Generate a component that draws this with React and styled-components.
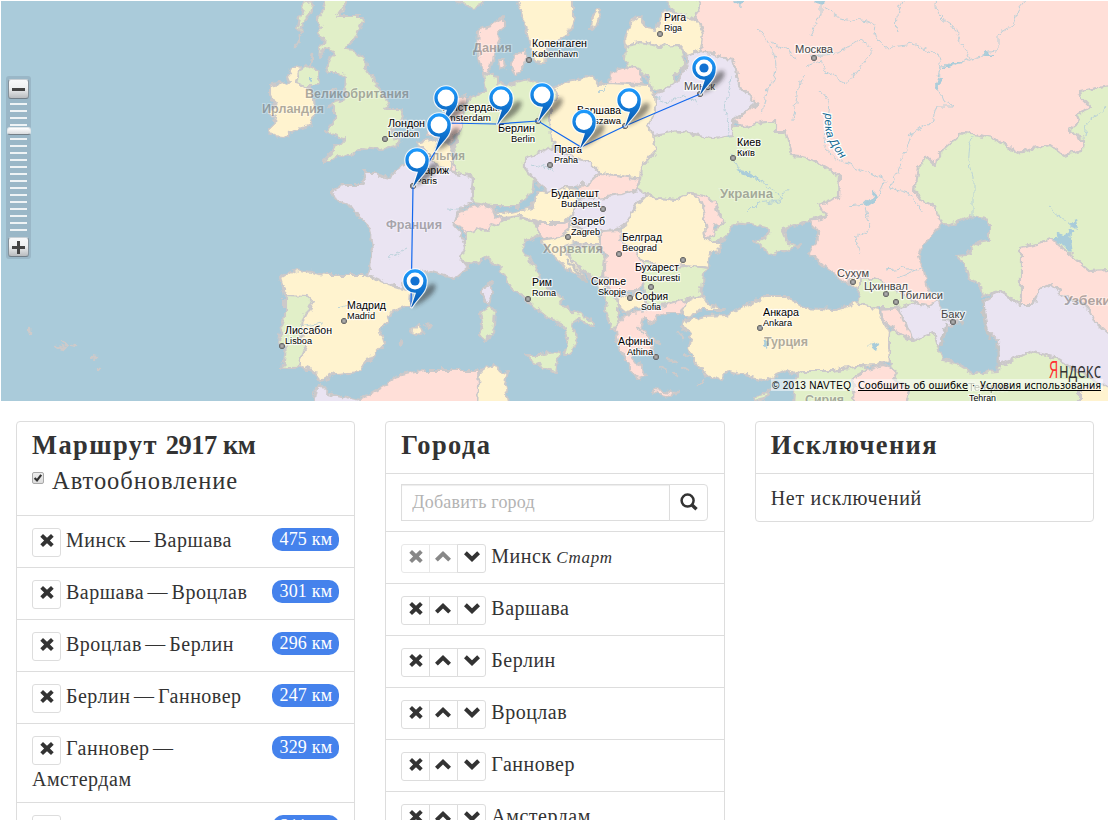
import React from "react";
import styled, { createGlobalStyle, css } from "styled-components";

const GlobalStyle = createGlobalStyle`
  * { box-sizing: border-box; }
  body {
    margin: 0;
    background: #fff;
    color: #333;
    font-family: "Liberation Serif", serif;
    font-size: 20px;
    line-height: 27px;
  }
  html, body { overflow: hidden; }
`;

const Page = styled.div`
  width: 1109px;
  height: 820px;
  padding: 1px 0 0 1px;
  overflow: hidden;
`;

const MapFrame = styled.div`
  position: relative;
  height: 400px;
  background: #aacbda;
  overflow: hidden;
`;

const MapSvg = styled.svg`
  display: block;
  width: 1107px;
  height: 400px;
`;

const ZoomControl = styled.div`
  position: absolute;
  left: 5px;
  top: 75px;
  width: 25px;
  height: 183px;
  padding: 3px 2px 2px;
  display: flex;
  flex-direction: column;
  align-items: center;
  justify-content: space-between;
  border-radius: 3px;
  background: rgba(120, 140, 155, 0.3);
`;

const ZoomButton = styled.div`
  width: 21px;
  height: 20px;
  flex: none;
  border: 1px solid #85929b;
  border-top-color: #c9d0d5;
  border-bottom: 1px solid #717e88;
  border-radius: 3px;
  background: linear-gradient(#f8f9fa, #eef0f1 45%, #b9bcbf);
  display: flex;
  align-items: center;
  justify-content: center;
`;

const Ticks = styled.div`
  width: 17px;
  height: 128px;
  margin-top: -3px;
  background: repeating-linear-gradient(#eef3f5 0 2px, transparent 2px 7px);
`;

const Handle = styled.div`
  position: absolute;
  left: 1px;
  top: 51px;
  width: 24px;
  height: 8px;
  border-radius: 3px;
  border: 1px solid #dfe5e8;
  border-bottom-color: #747f87;
  background: linear-gradient(#fff, #d9dcde);
`;

const Columns = styled.main`
  display: grid;
  grid-template-columns: repeat(3, 1fr);
  gap: 30px;
  padding: 20px 15px 0;
  align-items: start;
`;

const Panel = styled.section`
  border: 1px solid #ddd;
  border-radius: 4px;
`;

const Header = styled.header`
  padding: 10px 15px;
  height: ${(p) => (p.$tall ? 93 : 51)}px;
`;

const Title = styled.h3`
  margin: 0;
  font-size: 26.5px;
  line-height: 26px;
  font-weight: 700;
  white-space: nowrap;
  letter-spacing: 1.4px;
`;

const Total = styled.span`
  letter-spacing: -0.5px;
`;

const AutoLabel = styled.label`
  display: flex;
  align-items: flex-start;
  gap: 8px;
  margin-top: 10px;
  font-size: 24.5px;
  line-height: 26px;
  letter-spacing: 0.95px;
`;

const CheckBox = styled.span`
  display: flex;
  width: 12px;
  height: 12px;
  margin-top: 4px;
  border: 1px solid #a9a9a9;
  border-radius: 2px;
  background: linear-gradient(#eee, #dcdcdc);
`;

const List = styled.ul`
  list-style: none;
  margin: 0;
  padding: 0;
`;

const Row = styled.li`
  border-top: 1px solid #ddd;
  padding: 10px 15px;
  letter-spacing: 0.5px;
  word-spacing: -2px;
`;

const Name = styled.span`
  position: relative;
  top: 1px;
`;

const StartMark = styled.em`
  position: relative;
  top: 1px;
  margin-left: 1px;
  font-size: 17px;
  letter-spacing: 0.7px;
`;

const Badge = styled.span`
  float: right;
  margin-top: 2px;
  padding: 0 7px;
  height: 23px;
  line-height: 23px;
  border-radius: 10px;
  background: #4582ec;
  color: #fff;
  font-size: 18px;
  letter-spacing: 0.2px;
  word-spacing: 0;
`;

const Buttons = styled.span`
  display: inline-flex;
  vertical-align: top;
  margin: 2px 5px 0 0;
`;

const Button = styled.button`
  width: 29px;
  height: 29px;
  margin: 0;
  padding: 0;
  display: flex;
  justify-content: center;
  border: 1px solid #ddd;
  border-radius: 3px;
  background: #fff;
  color: #333;
  ${(p) =>
    p.$grouped &&
    css`
      & + & { margin-left: -1px; }
      &:not(:first-child) { border-top-left-radius: 0; border-bottom-left-radius: 0; }
      &:not(:last-child) { border-top-right-radius: 0; border-bottom-right-radius: 0; }
    `}
  ${(p) =>
    p.$disabled &&
    css`
      color: #888;
      border-color: #e8e8e8;
    `}
`;

const SearchRow = styled.form`
  display: flex;
  height: 58px;
  border-top: 1px solid #ddd;
  padding: 10px 16px 10px 15px;
`;

const Input = styled.input`
  flex: 1;
  min-width: 0;
  height: 37px;
  padding: 0 10px;
  border: 1px solid #ddd;
  border-radius: 0;
  box-shadow: inset 0 1px 1px rgba(0, 0, 0, 0.075);
  font: 18px "Liberation Serif", serif;
  letter-spacing: 0.2px;
  &::placeholder { color: #b3b3b3; opacity: 1; }
`;

const SearchButton = styled.button`
  width: 39px;
  height: 37px;
  margin-left: -1px;
  padding: 6px 9px 8px 10px;
  border: 1px solid #ddd;
  border-radius: 0 4px 4px 0;
  background: #fff;
`;

const Empty = styled.div`
  height: 48px;
  border-top: 1px solid #ddd;
  padding: 11px 15px;
  letter-spacing: 0.7px;
`;

const GlyphSvg = styled.svg`
  flex: none;
  margin: 2.5px ${(p) => (p.$kind === "up" ? 1.5 : 0)}px 0 0;
`;

const GLYPHS = {
  x: "M4 2L8 5.7L12 2L14.7 4.7L10.9 8.5L14.7 12.3L12 15L8 11.3L4 15L1.3 12.3L5.1 8.5L1.3 4.7Z",
  up: "M8 3L16 10.8L13.2 13.5L8 8.6L2.8 13.5L0 10.8Z",
  down: "M8 14L0 6.2L2.8 3.3L8 8.3L13.2 3.3L16 6.2Z",
};

const Glyph = ({ kind }) => (
  <GlyphSvg $kind={kind} width="16" height="18" viewBox="0 0 16 18">
    <path d={GLYPHS[kind]} fill="currentColor" />
  </GlyphSvg>
);

const C = { g: "#e1efc8", y: "#fff3cf", p: "#ffdfd8", v: "#eae4f2" };

const LANDS = [
  ["g", "325,0 327,10 320,20 323,30 318,37 325,40 323,50 322,60 328,50 335,53 330,67 328,75 340,75 348,80 347,90 348,100 337,103 330,107 337,110 337,120 333,128 327,133 337,138 347,140 343,145 337,147 333,155 325,163 332,163 340,157 353,158 363,150 383,152 400,147 403,142 390,135 400,128 406,120 403,112 387,112 390,103 382,93 377,83 368,70 367,60 357,53 347,52 357,40 365,23 363,18 340,18 347,8 350,0"],
  ["g", "307,5 315,2 312,15 306,22 302,35 300,30 302,20"],
  ["y", "290,78 293,70 305,67 300,75 298,84 308,88 313,90 316,100 317,115 312,127 300,131 285,139 275,138 270,132 277,125 278,118 272,115 278,108 272,97 272,88 285,85 292,83"],
  ["g", "300,75 310,67 318,72 322,82 318,88 308,88 298,85"],
  ["g", "452,0 460,4 475,10 483,8 488,0"],
  ["y", "518,0 523,15 529,30 532,45 535,63 547,64 550,50 560,42 570,36 575,20 575,0"],
  ["y", "594,20 600,12 603,15 598,28 593,32"],
  ["p", "480,33 487,30 493,28 502,22 506,18 506,28 500,33 502,43 497,53 495,63 490,75 485,75 482,63 479,50"],
  ["p", "500,62 507,62 508,70 502,71"],
  ["p", "514,58 522,55 527,50 530,60 524,70 518,77 513,68"],
  ["g", "485,75 500,78 500,84 508,88 520,85 530,82 545,88 557,90 559,98 552,108 553,120 553,133 555,150 540,158 527,160 527,170 537,183 535,195 530,197 520,208 495,208 473,205 476,195 476,180 458,175 455,165 457,160 455,147 462,135 465,115 468,103 478,98 488,93"],
  ["p", "452,100 467,97 468,105 465,118 465,128 458,137 453,143 440,138 428,138 432,130 445,118"],
  ["v", "422,150 420,158 408,165 398,172 392,180 383,178 378,173 365,173 367,183 362,187 345,187 333,193 337,202 352,207 360,218 372,230 375,250 372,270 370,277 387,285 403,290 408,278 427,272 447,278 457,281 470,270 462,260 467,250 462,233 455,225 463,210 473,205 476,180 458,175 450,172 438,168 428,155"],
  ["y", "420,145 430,142 442,140 452,145 455,150 452,158 456,167 450,172 438,168 428,155"],
  ["p", "452,165 458,168 458,174 453,173"],
  ["y", "287,297 282,280 297,271 327,277 367,277 387,285 403,290 413,293 412,307 395,313 383,333 387,345 377,355 363,373 337,375 323,383 315,373 300,367"],
  ["g", "287,297 310,298 315,303 305,323 302,340 307,350 300,367 297,370 285,370 288,350 280,345 282,333 287,320"],
  ["y", "412,333 422,328 425,335 420,337"],
  ["y", "427,326 434,327 432,330"],
  ["y", "400,344 404,341 402,347"],
  ["v", "484,291 490,287 493,283 495,293 490,307 484,297"],
  ["g", "482,315 492,309 497,315 495,337 487,343 482,338 484,325"],
  ["g", "467,235 480,229 488,233 493,226 503,222 523,218 540,226 540,238 527,243 525,253 537,270 541,278 550,293 565,300 562,305 573,312 595,323 595,329 580,322 573,327 580,342 572,357 566,357 570,340 565,327 550,320 540,312 530,303 513,290 503,270 487,260 473,268 465,263 462,260 467,250"],
  ["p", "455,225 463,213 470,210 482,207 495,210 497,218 505,222 500,228 493,226 488,233 480,229 475,233 467,235 463,228"],
  ["y", "497,212 512,215 533,210 540,193 550,195 565,190 580,192 577,205 575,215 565,225 543,225 523,218 503,220"],
  ["g", "528,357 543,357 563,353 559,363 557,374 547,370 533,362"],
  ["g", "667,0 672,10 687,20 697,22 702,7 700,0"],
  ["y", "627,40 632,25 642,18 648,30 658,32 666,13 687,18 702,25 705,37 703,53 690,58 680,47 660,48 643,45 628,48"],
  ["g", "628,48 643,45 660,48 680,47 687,60 687,68 675,80 675,88 660,93 653,90 650,80 643,72 632,70 627,62"],
  ["p", "613,75 632,68 643,72 645,86 612,85"],
  ["p", "700,0 1115,0 1115,88 1081,93 1083,100 1093,110 1078,117 1081,125 1070,133 1086,142 1085,153 1065,157 1051,147 1021,155 1008,148 995,140 981,137 965,135 951,147 940,157 938,168 928,158 920,170 916,193 923,203 935,207 945,225 925,247 920,258 926,273 931,293 941,302 933,308 918,305 895,290 858,280 851,287 828,270 811,255 822,235 811,223 828,220 821,207 840,200 841,177 811,160 793,157 787,133 777,133 777,123 763,125 747,128 735,123 758,107 750,97 740,85 738,72 735,62 722,58 712,55 703,53 705,37 702,25 697,20 702,7"],
  ["g", "655,137 680,133 695,136 715,140 735,137 735,128 747,128 763,125 777,123 777,133 787,133 793,157 803,158 811,160 830,170 841,177 840,193 840,200 821,207 828,218 811,223 797,227 787,231 785,233 790,245 803,248 787,252 770,258 769,253 757,243 767,240 772,232 753,227 737,225 727,240 713,245 708,240 723,227 717,210 707,197 693,195 678,202 658,200 648,197 638,192 643,170 658,153"],
  ["v", "657,97 670,90 678,83 690,65 690,58 703,53 712,55 722,58 735,62 738,72 740,85 750,97 758,107 745,115 735,123 735,137 715,140 695,136 680,133 655,137 650,127 658,115"],
  ["y", "555,90 570,83 595,78 600,87 610,85 650,87 657,97 658,115 650,127 655,137 658,153 643,170 642,181 617,177 602,175 592,165 570,157 553,143 552,120 552,108 559,98"],
  ["v", "527,160 540,155 553,150 570,157 592,165 602,175 590,185 575,190 565,190 550,195 537,183 527,170"],
  ["p", "590,185 602,175 617,177 642,181 638,192 625,197 600,200 583,200 580,192"],
  ["v", "577,210 583,200 600,200 625,197 640,192 648,197 640,205 628,225 615,232 600,237 588,235 573,222"],
  ["y", "648,197 658,200 678,202 693,195 703,203 707,223 708,240 713,245 722,245 723,253 712,255 710,270 687,267 667,270 643,262 637,253 623,240 622,232 628,225 640,205"],
  ["p", "693,195 703,203 707,223 708,240 715,238 717,227 727,225 720,215 717,205 707,197"],
  ["g", "643,262 667,270 687,267 710,270 705,277 702,297 687,303 663,307 650,307 647,293 643,280"],
  ["p", "540,228 543,225 565,225 572,222 570,232 560,240 550,242 541,238"],
  ["y", "560,240 570,232 573,225 588,235 600,238 603,247 590,247 575,245 567,248 573,262 585,275 590,283 573,273 565,267 550,253 545,243"],
  ["g", "567,248 600,247 607,262 605,278 598,283 585,272 573,262"],
  ["p", "603,233 622,232 623,240 637,253 643,262 645,273 643,293 630,293 617,297 608,287 607,270 608,257 603,247"],
  ["y", "598,281 608,280 608,292 600,288"],
  ["g", "607,290 617,297 620,310 623,320 622,328 615,333 610,322 607,305"],
  ["y", "620,300 643,293 650,307 640,310 628,315 620,308"],
  ["p", "617,330 627,317 650,312 683,303 688,307 683,315 667,315 657,320 655,325 645,320 643,327 650,337 657,353 652,357 640,350 633,357 648,377 640,380 633,373 625,357 618,340"],
  ["p", "655,392 665,393 680,395 673,398 655,395"],
  ["y", "688,303 702,297 713,307 727,312 703,312 690,320 685,316"],
  ["y", "687,323 707,318 727,317 743,310 767,298 787,298 807,310 838,312 858,305 878,308 883,320 891,333 890,348 891,363 880,367 858,368 835,373 815,373 803,373 797,377 790,372 767,383 747,377 730,373 723,382 707,377 700,367 690,350 693,337 683,325"],
  ["g", "803,373 835,373 868,367 868,372 856,380 855,408 795,408 797,380"],
  ["p", "856,380 868,372 885,367 895,370 898,380 911,393 908,408 855,408"],
  ["g", "891,333 899,334 915,343 935,335 941,350 945,362 958,365 975,375 1000,373 1001,367 1035,353 1055,358 1075,370 1115,392 1115,408 908,408 911,393 898,380 891,363"],
  ["y", "1081,393 1115,385 1115,408 1081,408"],
  ["g", "855,283 861,280 875,280 895,290 918,305 905,310 880,310 858,305 861,296"],
  ["y", "851,282 861,278 861,289 855,290"],
  ["p", "883,312 903,310 905,322 913,335 913,343 900,335 885,323"],
  ["v", "900,310 918,305 933,308 941,302 948,320 965,323 950,328 943,345 940,350 935,335 915,343 908,325"],
  ["g", "1115,88 1081,93 1083,100 1093,110 1078,117 1081,125 1070,133 1086,142 1085,153 1065,157 1051,147 1021,155 1008,148 995,140 981,137 965,135 951,147 940,157 938,168 928,158 920,170 916,193 923,203 935,207 945,228 958,225 971,218 991,223 991,243 980,245 970,252 971,257 958,258 968,267 971,280 983,287 985,298 1001,293 1023,307 1023,250 1055,242 1091,273 1115,272"],
  ["p", "1023,250 1055,242 1091,273 1115,272 1115,342 1098,325 1091,310 1065,297 1053,287 1041,293 1035,307 1023,307"],
  ["v", "985,303 1001,293 1023,307 1035,307 1041,293 1053,287 1065,297 1091,310 1098,325 1115,340 1115,392 1075,370 1055,358 1035,353 1001,367 1000,343 990,333 985,313"],
  ["v", "315,408 318,390 323,387 330,395 362,402 362,408"],
  ["p", "362,402 388,387 403,377 427,372 480,372 482,408 358,408"],
  ["y", "480,408 482,372 497,367 503,375 510,373 507,387 512,408"],
  ["g", "755,399 765,396 774,391 766,401 758,403"],
];

const RIVERS = [
  "M823,0V17L812,37M825,10L842,20L870,24L877,27Q873,38 888,50L915,46L941,57L944,68L963,65L983,57L1000,52L1000,37L1015,27L1020,10L1028,0",
  "M808,67L823,62L827,72L850,86L860,72L876,52L862,42L840,55L810,57",
  "M944,68Q939,80 939,88L945,103L957,108L939,108L934,125L914,135L907,155L900,173L892,190L910,195L925,215",
  "M822,92L831,105L826,150L840,162L870,175L887,182L880,198L867,206L850,208",
  "M974,140Q967,160 975,180V220M1108,110L1088,125L1086,140",
  "M905,0Q895,20 900,35M940,0Q932,15 955,28L971,60",
  "M657,100L670,105L685,97L700,105M733,80L727,110L732,140M733,155L740,170L760,180L785,200",
  "M760,30Q790,65 770,90L765,115M805,78L800,90L795,122M775,45L800,60",
  "M868,210L873,230L858,240L862,255M888,272L905,270L920,273M900,280L925,270M1050,210L1080,232",
  "M790,190L780,202L760,205L750,215M535,165L555,172M610,85L600,95M450,210L470,212M295,330L325,325M340,310L350,307M390,260L410,250",
];

const LAKES = [
  "813,0 830,0 826,7 818,5", "944,70 955,64 965,64 950,70", "940,78 945,80 940,92 937,86", "985,55 990,53 995,58 987,58", "1055,242 1060,235 1068,237 1072,231 1078,234 1071,240 1073,255 1066,248",
  "1070,225 1078,222 1080,230 1074,229", "865,207 873,200 877,192 878,203 870,208", "870,347 882,344 877,352", "738,172 750,173 765,183 755,181 745,176", "766,339 770,342 769,350 765,347", "740,0 748,3 743,8 737,4",
  "312,78 315,78 315,84 312,83",
];

const COUNTRIES = [
  ["Великобритания", 305, 98, 104], ["Ирландия", 262, 113, 62], ["Дания", 473, 52, 39],
  ["Бельгия", 417, 160, 48], ["Франция", 386, 229, 56], ["Украина", 720, 198, 53],
  ["Хорватия", 543, 253, 60], ["Турция", 764, 346, 44], ["Сирия", 805, 404, 39], ["Узбекистан", 1064, 305, 78],
];

const CITIES = [
  ["Копенгаген", "København", 532, 47, 55, 532, 46, 529, 60],
  ["Рига", "Riga", 664, 21, 22, 664, 18, 660, 34],
  ["Москва", "", 795, 53, 38, 0, 0, 814, 58],
  ["Минск", "", 684, 90, 31, 0, 0, 700, 94],
  ["Лондон", "London", 388, 127, 37, 388, 31, 385, 139],
  ["Амстердам", "Amsterdam", 443, 111, 57, 441, 50, 443, 123],
  ["Берлин", "Berlin", 498, 132, 37, 511, 24, 538, 121],
  ["Варшава", "Warszawa", 577, 114, 44, 577, 44, 625, 126],
  ["Прага", "Praha", 554, 153, 28, 554, 24, 550, 165],
  ["Париж", "Paris", 417, 174, 32, 415, 22, 413, 186],
  ["Киев", "Київ", 737, 146, 24, 737, 18, 733, 158],
  ["Будапешт", "Budapest", 551, 197, 48, 561, 39, 603, 209],
  ["Загреб", "Zagreb", 571, 225, 34, 571, 29, 568, 237],
  ["Белград", "Beograd", 622, 241, 40, 622, 35, 619, 254],
  ["Бухарест", "Bucuresti", 635, 271, 44, 641, 39, 683, 260],
  ["Скопье", "Skopje", 591, 285, 35, 598, 28, 630, 298],
  ["София", "Sofia", 635, 300, 33, 641, 20, 651, 287],
  ["Афины", "Athina", 618, 345, 35, 627, 26, 656, 357],
  ["Анкара", "Ankara", 763, 316, 36, 763, 29, 760, 328],
  ["Рим", "Roma", 532, 286, 20, 532, 24, 528, 299],
  ["Мадрид", "Madrid", 347, 309, 39, 347, 28, 344, 321],
  ["Лиссабон", "Lisboa", 285, 334, 47, 285, 27, 282, 346],
  ["Сухум", "", 837, 277, 32, 0, 0, 853, 282],
  ["Цхинвал", "", 864, 290, 44, 0, 0, 886, 294],
  ["Тбилиси", "", 899, 299, 44, 0, 0, 896, 302],
  ["Баку", "", 941, 318, 24, 0, 0, 953, 322],
  ["Тегеран", "Tehran", 968, 391, 40, 969, 27, 0, 0],
];

const PINS = [
  [446, 98], [501, 98], [542, 95], [629, 100], [584, 121.5], [439, 125], [417, 160], [704, 68, true], [415, 281, true],
];

const PIN_SHAPE = "M-3.8,26.3L1,11.7A11.7,11.7 0 1 1 11.7,1C11.7,12 4,15 -3.2,26.3Z";

const Pin = ({ x, y, dot }) => (
  <g transform={`translate(${x} ${y})`}>
    <path d="M-3,26C3,15 10,7 16,3C23,1 21,9 16,14C11,19 3,24 -3,26Z" fill="#222" opacity=".5" filter="url(#soft)" />
    <path d={PIN_SHAPE} fill="#fff" stroke="#fff" strokeOpacity=".85" strokeWidth="2.2" strokeLinejoin="round" />
    <path d={PIN_SHAPE} fill="url(#pin)" />
    <circle r="8.4" fill="#fff" />
    {dot && <circle r="4.6" fill="#1272d2" />}
  </g>
);

const EuropeMap = () => (
  <MapSvg viewBox="1 1 1107 400">
    <defs>
      <filter id="coast" filterUnits="userSpaceOnUse" x="-10" y="-10" width="1130" height="425" colorInterpolationFilters="sRGB">
        <feTurbulence type="fractalNoise" baseFrequency=".13" numOctaves="3" seed="4" />
        <feDisplacementMap in="SourceGraphic" scale="8" xChannelSelector="R" yChannelSelector="G" />
      </filter>
      <filter id="soft" x="-50%" y="-50%" width="200%" height="200%"><feGaussianBlur stdDeviation="2" /></filter>
      <linearGradient id="pin" x1="0" y1="0" x2="0" y2="1">
        <stop offset="0" stopColor="#1e9cff" /><stop offset="1" stopColor="#0452a8" />
      </linearGradient>
      <radialGradient id="town"><stop offset="0" stopColor="#bbb" /><stop offset="1" stopColor="#777" /></radialGradient>
    </defs>
    <rect x="-10" y="-10" width="1130" height="420" fill="#aacbda" />
    <g filter="url(#coast)">
      <g transform="translate(-2 -2)">
        <g stroke="#ccc9ca" strokeWidth="2.1" strokeLinejoin="round">
          {LANDS.map(([c, pts], i) => <polygon key={i} points={pts} fill={C[c]} />)}
        </g>
        <g fill="#a9ccda">{LAKES.map((p) => <polygon key={p} points={p} />)}</g>
        <g fill="none" stroke="#b4cfd8" strokeWidth=".9">{RIVERS.map((d) => <path key={d} d={d} />)}</g>
        <path d="M985,302L987,325L992,342M1000,345V370M948,325L943,348M568,262L590,284M944,321L966,324" stroke="#c6c6c6" strokeWidth="3" fill="none" />
        <path d="M31,332l1,4M58,348l9,2M64,345l6,3M74,346l4,1M92,359l8,1M99,371l3,0M302,38l-3,10M314,55l-2,12M337,92l-5,2M685,340l-4,-6M670,362l8,2M675,375l5,3M663,369l6,3M692,360l-5,-4M700,388l5,-6M690,372l-5,-3M640,330l5,5M656,340l7,5M682,328l6,5" stroke="#cdcaca" strokeWidth="2.5" strokeLinecap="round" fill="none" />
      </g>
    </g>
    <g fontFamily="Liberation Sans, sans-serif" fontWeight="700" fontSize="12.8">
      {COUNTRIES.map(([t, x, y, w]) => (
        <text key={t} x={x} y={y} textLength={w} lengthAdjust="spacingAndGlyphs" fill="#555" fillOpacity=".48" stroke="#fff" strokeOpacity=".3" strokeWidth="2" paintOrder="stroke">{t}</text>
      ))}
    </g>
    <g fontFamily="Liberation Sans, sans-serif" stroke="#fff" strokeOpacity=".75" strokeWidth="2.4" strokeLinejoin="round" paintOrder="stroke">
      {CITIES.map(([a, b, x, y, w, bx, bw, dx, dy]) => (
        <React.Fragment key={a}>
          {dx > 0 && <circle cx={dx} cy={dy} r="2.6" fill="url(#town)" stroke="#555" strokeOpacity="1" strokeWidth="1" />}
          <text x={x} y={y} fontSize="11.2" fill={b ? "#000" : "#444"} textLength={w} lengthAdjust="spacingAndGlyphs" opacity={a === "Тегеран" ? 0.45 : 1}>{a}</text>
          {b && <text x={bx} y={y + 10} fontSize="9.7" fill="#000" textLength={bw} lengthAdjust="spacingAndGlyphs">{b}</text>}
        </React.Fragment>
      ))}
    </g>
    <path id="don" d="M825,113Q824,133 829,141Q833,149 845,164" fill="none" />
    <text fontFamily="Liberation Sans, sans-serif" fontStyle="italic" fontSize="11.5" fill="#126790" stroke="#fff" strokeWidth="2.4" paintOrder="stroke">
      <textPath href="#don" textLength="51">река Дон</textPath>
    </text>
    <polyline points="700,94 625,126 581,147 538,121 497,124 443,123 435,152 413,187 411,307" fill="none" stroke="#1267ee" strokeWidth="1.2" />
    {PINS.map(([x, y, dot]) => <Pin key={x} x={x} y={y} dot={dot} />)}
    <rect x="771" y="379" width="332" height="12" fill="#fff" opacity=".5" />
    <g fontFamily="DejaVu Sans, sans-serif" fontSize="10" fill="#000">
      <text x="772" y="389" textLength="79" fontFamily="Liberation Sans, sans-serif">© 2013 NAVTEQ</text>
      <text x="858" y="389" textLength="110" lengthAdjust="spacingAndGlyphs" textDecoration="underline">Сообщить об ошибке</text>
      <text x="972" y="389">·</text>
      <text x="980" y="389" textLength="121" lengthAdjust="spacingAndGlyphs" textDecoration="underline">Условия использования</text>
    </g>
    <g fontFamily="Open Sans, sans-serif" fontWeight="500" fontSize="21" fill="#333">
      <text x="1049" y="378" textLength="9.5" lengthAdjust="spacingAndGlyphs" fill="#f33" fontSize="23">Я</text>
      <text x="1059" y="378" textLength="42" lengthAdjust="spacingAndGlyphs">ндекс</text>
    </g>
  </MapSvg>
);

const ROUTES = [
  ["Минск — Варшава", 475], ["Варшава — Вроцлав", 301], ["Вроцлав — Берлин", 296],
  ["Берлин — Ганновер", 247], ["Ганновер — Амстердам", 329], ["Амстердам — Брюссель", 211],
];
const TOWNS = ["Минск", "Варшава", "Берлин", "Вроцлав", "Ганновер", "Амстердам"];

export default function App() {
  return (
    <Page>
      <GlobalStyle />
      <MapFrame>
        <EuropeMap />
        <ZoomControl>
          <ZoomButton><svg width="13" height="13"><path d="M0 6.5H13" stroke="#444" strokeWidth="3" /></svg></ZoomButton>
          <Ticks />
          <ZoomButton><svg width="13" height="13"><path d="M0 6.5H13M6.5 0V13" stroke="#444" strokeWidth="3" /></svg></ZoomButton>
          <Handle />
        </ZoomControl>
      </MapFrame>
      <Columns>
        <Panel>
          <Header $tall>
            <Title>Маршрут <Total>2917 км</Total></Title>
            <AutoLabel>
              <CheckBox>
                <svg width="10" height="10" viewBox="0 0 10 10"><path d="M1.6 5L4 7.4L8.2 1.8" fill="none" stroke="#333" strokeWidth="2.2" /></svg>
              </CheckBox>
              Автообновление
            </AutoLabel>
          </Header>
          <List>
            {ROUTES.map(([name, km]) => (
              <Row key={name}>
                <Badge>{km} км</Badge>
                <Buttons><Button><Glyph kind="x" /></Button></Buttons>
                <Name>{name}</Name>
              </Row>
            ))}
          </List>
        </Panel>
        <Panel>
          <Header><Title>Города</Title></Header>
          <SearchRow>
            <Input placeholder="Добавить город" />
            <SearchButton type="button">
              <svg width="18" height="18" viewBox="0 0 18 18" style={{ display: "block" }}>
                <circle cx="7.6" cy="7.6" r="6" fill="none" stroke="#333" strokeWidth="2.5" />
                <path d="M12 12L16.5 16.3" stroke="#333" strokeWidth="3.4" />
              </svg>
            </SearchButton>
          </SearchRow>
          <List>
            {TOWNS.map((town, i) => (
              <Row key={town}>
                <Buttons>
                  <Button $grouped $disabled={i === 0}><Glyph kind="x" /></Button>
                  <Button $grouped $disabled={i === 0}><Glyph kind="up" /></Button>
                  <Button $grouped><Glyph kind="down" /></Button>
                </Buttons>
                <Name>{town}</Name> {i === 0 && <StartMark>Старт</StartMark>}
              </Row>
            ))}
          </List>
        </Panel>
        <Panel>
          <Header><Title>Исключения</Title></Header>
          <Empty>Нет исключений</Empty>
        </Panel>
      </Columns>
    </Page>
  );
}
